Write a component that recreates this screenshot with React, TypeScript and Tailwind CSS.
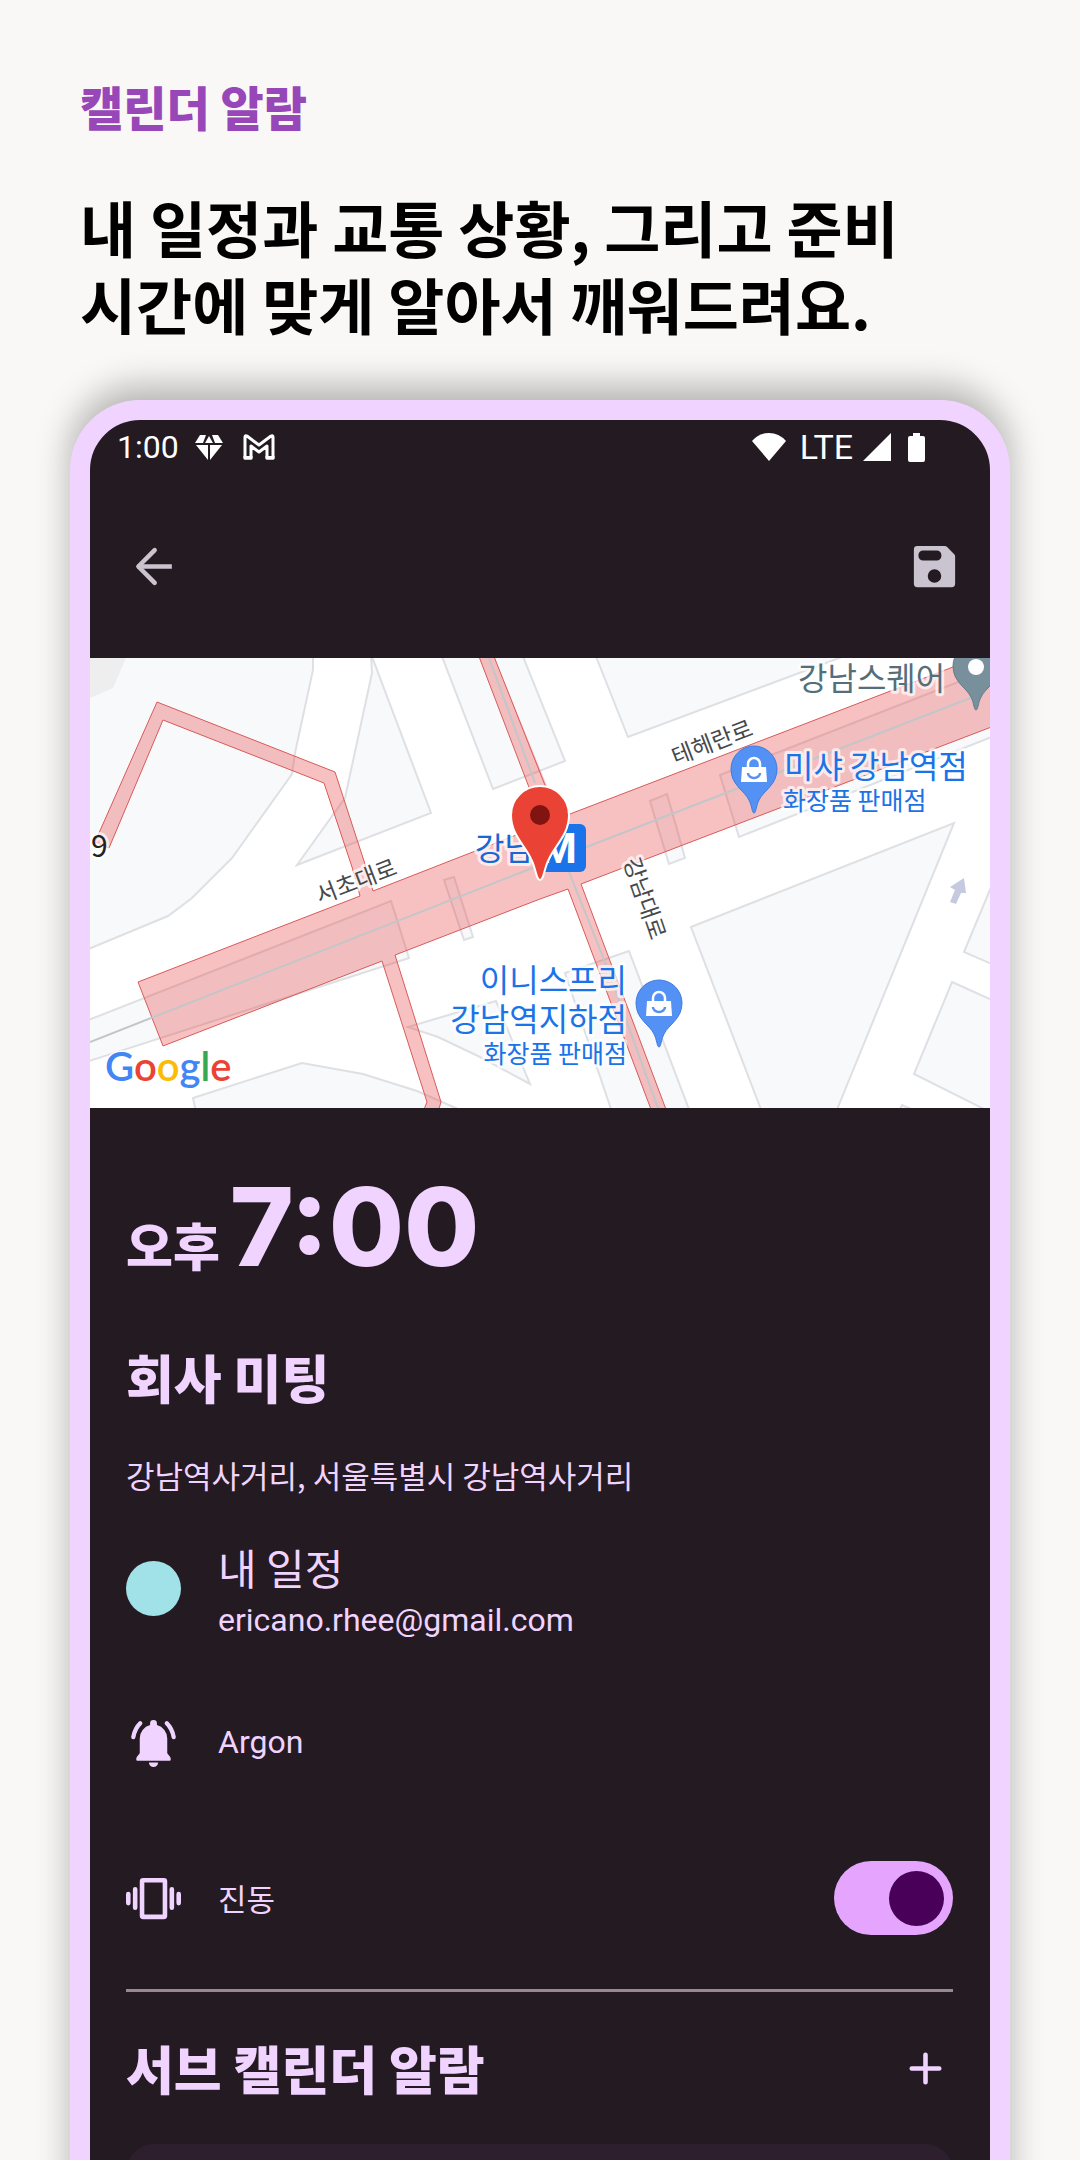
import { ReactNode, useState } from "react"

interface MapLabelProps {
  x: number
  y: number
  size?: number
  fill?: string
  anchor?: "start" | "middle" | "end"
  weight?: number
  rotate?: number
  children: ReactNode
}

interface PinProps {
  x: number
  y: number
}

function MapLabel({ x, y, size = 32, fill = "#1a73e8", anchor = "start", weight = 400, rotate = 0, children }: MapLabelProps) {
  return (
    <text
      x={x}
      y={y}
      fontSize={size}
      fill={fill}
      fontWeight={weight}
      textAnchor={anchor}
      transform={rotate ? `rotate(${rotate} ${x} ${y})` : undefined}
      stroke="#ffffff"
      strokeOpacity={0.7}
      strokeWidth={6}
      strokeLinejoin="round"
      paintOrder="stroke"
    >
      {children}
    </text>
  )
}

function ShopPin({ x, y }: PinProps) {
  return (
    <g transform={`translate(${x} ${y})`}>
      <path d="M0 44C-2 44-2 37-5 31C-10 21-23 16-23 0A23 23 0 0 1 23 0C23 16 10 21 5 31C2 37 2 44 0 44Z" fill="#5491f5" stroke="#3f7be0" strokeWidth="1" />
      <path d="M-12 -2H12L13 13H-13Z" fill="#fff" />
      <path d="M-6 -1V-5A6 6 0 0 1 6 -5V-1" fill="none" stroke="#fff" strokeWidth="2.5" />
      <path d="M-6 4A6 5 0 0 0 6 4" fill="none" stroke="#5491f5" strokeWidth="2.5" />
    </g>
  )
}

function MapView() {
  return (
    <svg viewBox="0 0 900 450" className="block w-full bg-white font-['Noto_Sans_CJK_KR',sans-serif]" role="img" aria-label="강남역 지도">
      {/* blocks */}
      <g fill="#f8f9fb" stroke="#dfe0e3" strokeWidth="2">
        <path d="M-4 -4H223V12L205 95L202 116L142 200L102 240L78 258L-4 292Z" />
        <path d="M281 -4L282 15L255 140L207 207L341 155Z" />
        <path d="M351 -4L403 131L475 103L432 -4Z" />
        <path d="M505 -4L538 79L760 -4Z" />
        <path d="M-4 363L301 243L319 300L-4 404Z" />
        <path d="M354 222L364 219L383 279L374 282Z" />
        <path d="M318 369L406 343L440 426L388 398L348 379Z" />
        <path d="M106 454L103 440L212 405L273 416L327 433L375 454Z" />
        <path d="M560 143L577 136L595 200L579 206Z" />
        <path d="M630 117L904 10V78L649 179Z" />
        <path d="M601 269L864 165L746 454H672Z" />
        <path d="M904 222L874 294L904 307Z" />
        <path d="M862 324L904 343V456L824 416Z" />
        <path d="M809 454L812 447L828 454Z" />
        <path d="M475 315L539 293L600 454H522Z" />
      </g>
      <path d="M0 0H36L23 30L0 40Z" fill="#eeeeee" />

      {/* underground station */}
      <path
        d="M67 44L245 114L274 203L283 233L480 156L863 9L904 -6V68L491 226L577 454H562L478 231L450 241L305 297L351 444L348 454H333L337 444L292 303L73 388L48 324L270 238L262 209L234 125L73 62L19 190L5 184Z"
        fill="#e74343"
        fillOpacity="0.33"
        stroke="#d85a5a"
        strokeWidth="1"
      />
      <path d="M388 -4L448 152L466 162L470 160L403 -4Z" fill="#e74343" fillOpacity="0.33" />
      <path d="M388 -4L445 145M403 -4L468 160" stroke="#d85a5a" strokeWidth="1" fill="none" />
      <g stroke="#c3c6c9" strokeWidth="2" fill="none">
        <path d="M0 384L450 207L883 39" />
        <path d="M399 0L445 125M479 214L517 309L568 450" />
      </g>

      <path d="M874 220L876 235L871 235L866 246L860 244L865 232L860 229Z" fill="#c5cae0" />

      <MapLabel x={269} y={231} size={23} fill="#45494d" anchor="middle" rotate={-21}>서초대로</MapLabel>
      <MapLabel x={625} y={92} size={23} fill="#45494d" anchor="middle" rotate={-21}>테헤란로</MapLabel>
      <MapLabel x={547} y={243} size={23} fill="#45494d" anchor="middle" rotate={71}>강남대로</MapLabel>
      <MapLabel x={1} y={199} size={30} fill="#202124">9</MapLabel>

      <MapLabel x={385} y={202} fill="#1967d2">강남</MapLabel>
      <rect x="448" y="166" width="48" height="48" rx="6" fill="#1a73e8" />
      <text x="450" y="205" fontSize="42" fontWeight="700" fill="#fff" className="font-[Roboto,sans-serif]">M</text>

      <path d="M450 222C446 222 446 210 441 201C435 187 421 177 421 157A29 29 0 0 1 479 157C479 177 465 187 459 201C454 210 454 222 450 222Z" fill="#ea4335" stroke="#fff" strokeWidth="2" />
      <circle cx="450" cy="157" r="10" fill="#811411" />

      <ShopPin x={664} y={111} />
      <MapLabel x={694} y={120}>미샤 강남역점</MapLabel>
      <MapLabel x={693} y={152} size={25}>화장품 판매점</MapLabel>

      <ShopPin x={569} y={345} />
      <MapLabel x={537} y={334} anchor="end">이니스프리</MapLabel>
      <MapLabel x={537} y={373} anchor="end">강남역지하점</MapLabel>
      <MapLabel x={537} y={405} size={25} anchor="end">화장품 판매점</MapLabel>

      <MapLabel x={708} y={32} fill="#546e7a">강남스퀘어</MapLabel>
      <path d="M886 52C884 52 884 45 881 39C876 29 863 24 863 8A23 23 0 0 1 909 8C909 24 896 29 891 39C888 45 888 52 886 52Z" fill="#78909c" stroke="#607d8b" />
      <circle cx="886" cy="9" r="8" fill="#fff" />

      <text x="15" y="423" fontSize="40" fontWeight="600" stroke="#fff" strokeWidth="3" paintOrder="stroke" className="font-[Lato,sans-serif]">
        <tspan fill="#4285f4">G</tspan>
        <tspan fill="#ea4335">o</tspan>
        <tspan fill="#fbbc04">o</tspan>
        <tspan fill="#4285f4">g</tspan>
        <tspan fill="#34a853">l</tspan>
        <tspan fill="#ea4335">e</tspan>
      </text>
    </svg>
  )
}

function StatusBar() {
  return (
    <div className="flex h-[54px] items-center justify-between pr-[65px] pl-[27px] font-[Roboto,sans-serif] text-[32px] leading-10 text-white">
      <div className="flex items-center">
        <span>1:00</span>
        <svg viewBox="0 0 28 25" className="ml-4 h-[25px] w-7" fill="currentColor">
          <path d="M5 0H11L8 8H0ZM23 0H17L20 8H28ZM14 1L18 8H10ZM1 10H13V25ZM27 10H15V25Z" />
        </svg>
        <svg viewBox="0 0 32 26" className="ml-5 h-[26px] w-8" fill="none" stroke="currentColor" strokeWidth="3" strokeLinejoin="round">
          <path d="M2 24V3Q2 1 4 2L16 11L28 2Q30 1 30 3V24H24V12L16 18L8 12V24Z" />
          <path d="M2 22V24H8V22M24 22V24H30V22" fill="currentColor" />
        </svg>
      </div>
      <div className="flex items-center">
        <svg viewBox="0 0 34 28" className="h-7 w-[34px]" fill="currentColor">
          <path d="M17 28L0 8Q7 0 17 0T34 8Z" />
        </svg>
        <span className="mr-2.5 ml-3.5 text-[34px]">LTE</span>
        <svg viewBox="0 0 28 28" className="size-7" fill="currentColor">
          <path d="M28 0V28H0Z" />
        </svg>
        <svg viewBox="0 0 17 29" className="ml-[17px] h-[29px] w-[17px]" fill="currentColor">
          <path d="M5 0H12V3H15Q17 3 17 5V27Q17 29 15 29H2Q0 29 0 27V5Q0 3 2 3H5Z" />
        </svg>
      </div>
    </div>
  )
}

export default function App() {
  const [vibrate, setVibrate] = useState<boolean>(true)

  return (
    <main className="flex min-h-screen flex-col overflow-hidden bg-[#f9f8f6] px-[70px] pt-[78px] font-['Noto_Sans_CJK_KR',sans-serif]">
      <header className="px-2.5">
        <p className="text-[47px] leading-14 font-black text-[#9747b7]">캘린더 알람</p>
        <h1 className="mt-[54px] text-[61px] leading-[77px] font-bold text-black">
          내 일정과 교통 상황, 그리고 준비
          <br />
          시간에 맞게 알아서 깨워드려요.
        </h1>
      </header>

      {/* runs past the bottom edge so the shadow does not end there */}
      <div className="mt-[58px] -mb-16 flex flex-1 flex-col rounded-t-[70px] border-[20px] border-b-0 border-[#f0d4ff] bg-[#241a21] text-[#f0d4ff] shadow-[0_-14px_34px_rgba(0,0,0,0.28)]">
        <StatusBar />

        <nav className="flex h-[184px] items-center justify-between pr-7 pl-9 text-[#cac4d0]">
          <button type="button" aria-label="뒤로">
            <svg viewBox="0 0 24 24" className="size-[55px]" fill="none" stroke="currentColor" strokeWidth="2">
              <path d="M20 12H5" />
              <path d="M12.5 4.9L5.4 12L12.5 19.1" strokeLinecap="round" strokeLinejoin="round" />
            </svg>
          </button>
          <button type="button" aria-label="저장">
            <svg viewBox="0 0 24 24" className="size-[55px]" fill="currentColor">
              <path
                fillRule="evenodd"
                d="M4.500 3H16.500Q17 3 17.400 3.400L20.600 6.600Q21 7 21 7.500V19.500Q21 21 19.500 21H4.500Q3 21 3 19.500V4.500Q3 3 4.500 3ZM7 5A2 2 0 0 0 5 7V7.400A2 2 0 0 0 7 9.400H13A2 2 0 0 0 15 7.400V7A2 2 0 0 0 13 5ZM12 13.200A2.950 2.950 0 0 0 12 19.100A2.950 2.950 0 0 0 12 13.200Z"
              />
            </svg>
          </button>
        </nav>

        <MapView />

        <section className="flex flex-1 flex-col pt-16 pr-[37px] pl-9">
          <p className="flex items-baseline gap-2.5">
            <span className="text-[51px] leading-14 font-black">오후</span>
            <span className="font-[Inter,sans-serif] text-[109px] leading-[108px] font-extrabold">7:00</span>
          </p>
          <h2 className="mt-[67px] text-[52px] leading-[60px] font-black">회사 미팅</h2>
          <p className="mt-12 text-[31px] leading-10">강남역사거리, 서울특별시 강남역사거리</p>

          <div className="mt-10 flex items-center gap-[37px]">
            <span className="size-[55px] rounded-full bg-[#a1e1e8]" />
            <div>
              <p className="text-[42px] leading-[63px]">내 일정</p>
              <p className="font-[Roboto,sans-serif] text-[32px] leading-11">ericano.rhee@gmail.com</p>
            </div>
          </div>

          <div className="mt-[72px] flex h-14 items-center gap-[37px]">
            <svg viewBox="0 0 24 24" className="size-[55px]" fill="currentColor">
              <path d="M12 2.200A1.500 1.500 0 0 1 13.500 3.700V4.400A6 6 0 0 1 18 10.200V16.700L19.300 18.300Q20 20 18.700 20H5.300Q4 20 4.700 18.300L6 16.700V10.200A6 6 0 0 1 10.500 4.400V3.700A1.500 1.500 0 0 1 12 2.200Z" />
              <path d="M10 20.700H14A2 2 0 0 1 10 20.700Z" />
              <path d="M6.200 3.600Q3.800 6 3.200 9.600M17.800 3.600Q20.200 6 20.800 9.600" fill="none" stroke="currentColor" strokeWidth="1.900" strokeLinecap="round" />
            </svg>
            <p className="font-[Roboto,sans-serif] text-[32px] leading-10">Argon</p>
          </div>

          <div className="mt-[91px] flex h-[74px] items-center gap-[37px]">
            <svg viewBox="0 0 24 24" className="size-[55px]" fill="none" stroke="currentColor" strokeWidth="2" strokeLinecap="round">
              <rect x="7" y="4" width="10" height="16" rx="0.500" />
              <path d="M1 10V14M4 8V16M20 8V16M23 10V14" />
            </svg>
            <label htmlFor="vibrate" className="flex-1 text-[31px] leading-10">진동</label>
            <input
              id="vibrate"
              type="checkbox"
              role="switch"
              checked={vibrate}
              onChange={(e) => setVibrate(e.target.checked)}
              className="flex h-[74px] w-[119px] cursor-pointer appearance-none items-center rounded-full bg-[#5b4a58] px-[9px] before:size-[55px] before:rounded-full before:bg-[#480058] checked:justify-end checked:bg-[#e5a5ff]"
            />
          </div>

          <hr className="mt-[54px] border-t-3 border-[#99898f]" />

          <div className="mt-[46px] flex h-[60px] items-center justify-between">
            <h2 className="text-[52px] leading-[60px] font-black">서브 캘린더 알람</h2>
            <button type="button" aria-label="알람 추가">
              <svg viewBox="0 0 24 24" className="size-[55px]" fill="none" stroke="currentColor" strokeWidth="2" strokeLinecap="round">
                <path d="M12 6V18M6 12H18" />
              </svg>
            </button>
          </div>

          <div className="mt-[46px] min-h-20 flex-1 rounded-t-[28px] bg-[#2d1f2d]" />
        </section>
      </div>
    </main>
  )
}
